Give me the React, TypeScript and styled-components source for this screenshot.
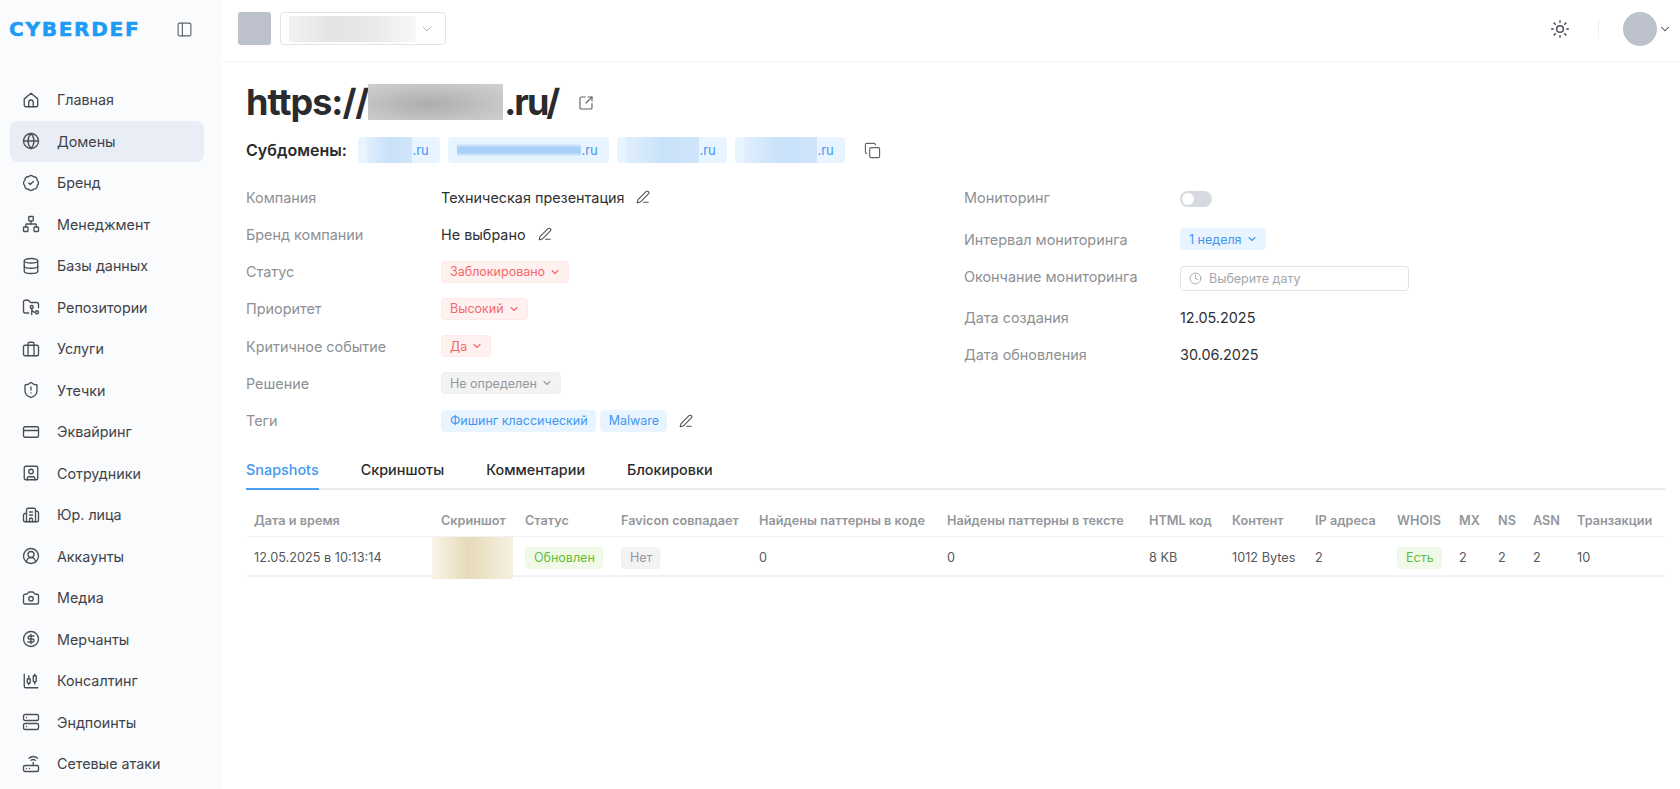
import React from 'react'
import styled, { createGlobalStyle } from 'styled-components'
import {
  BadgeCheck,
  Building2,
  Camera,
  ChartCandlestick,
  ChevronDown,
  CircleDollarSign,
  CircleUserRound,
  Clock,
  Copy,
  CreditCard,
  Database,
  FolderGit2,
  Globe,
  Network,
  PanelLeft,
  PenLine,
  Router,
  Server,
  ShieldAlert,
  SquareArrowOutUpRight,
  SquareUser,
  Sun,
} from 'lucide-react'

const GlobalStyle = createGlobalStyle`
  html, body {
    margin: 0;
    height: 100%;
    overflow: hidden;
    background: #fff;
    font-family: Inter, "Noto Sans", sans-serif;
    color: #2b2b2d;
  }
  * {
    box-sizing: border-box;
  }
`

const Page = styled.div`
  display: flex;
  height: 789px;
  overflow: hidden;
`

const Sidebar = styled.aside`
  flex: 0 0 221px;
  background: #fafbfd;
  padding: 0 17px 0 10px;
`

const Brand = styled.div`
  display: flex;
  align-items: center;
  justify-content: space-between;
  height: 58px;
  padding-right: 11px;
  color: #5f6368;
`

const Logo = styled.span`
  font-family: 'DejaVu Sans', sans-serif;
  font-weight: 700;
  font-size: 20px;
  letter-spacing: 1.75px;
  line-height: 1;
  margin-left: -1px;
  color: #1d9bf5;
  -webkit-text-stroke: 0.6px #1d9bf5;
`

const NavList = styled.nav`
  display: flex;
  flex-direction: column;
  margin-top: 21px;
`

const NavItem = styled.a<{ $active?: boolean }>`
  display: flex;
  align-items: center;
  gap: 17px;
  flex: 0 0 41.5px;
  padding-left: 12px;
  border-radius: 8px;
  font-size: 14.3px;
  color: #3f4349;
  background: ${(p) => (p.$active ? '#e9eef6' : 'transparent')};

  svg {
    flex: none;
    color: #4b4f55;
  }
`

const Content = styled.div`
  flex: 1;
  min-width: 0;
`

const Topbar = styled.header`
  display: flex;
  align-items: center;
  height: 62px;
  padding: 0 8px 4px 17px;
  border-bottom: 1px solid #f2f3f5;
`

const Square = styled.div`
  width: 33px;
  height: 33px;
  border-radius: 3px;
  background: #bcc1cb;
`

const ProjectSelect = styled.div`
  display: flex;
  align-items: center;
  justify-content: space-between;
  width: 166px;
  height: 33px;
  margin-left: 9px;
  padding: 0 10px 0 8px;
  border: 1px solid #e3e4e8;
  border-radius: 4px;
  color: #a9adb3;
`

const SelectBlur = styled.div`
  width: 127px;
  height: 26px;
  background: linear-gradient(90deg, #f2f2f2, #e4e4e4 35%, #e8e8e8 60%, #f7f7f7);
`

const TopActions = styled.div`
  display: flex;
  align-items: center;
  margin-left: auto;
  color: #4b4f55;
`

const ActionDivider = styled.div`
  width: 1px;
  height: 20px;
  margin: 0 24px 0 28px;
  background: #eeeff1;
`

const Avatar = styled.div`
  width: 34px;
  height: 34px;
  border-radius: 50%;
  background: #bcc1cb;
  margin-right: 1px;
`

const Main = styled.main`
  padding: 17px 15px 0 25px;
`

const TitleRow = styled.div`
  display: flex;
  align-items: center;
  height: 46px;
`

const Title = styled.h1`
  display: flex;
  align-items: center;
  margin: 0;
  font-size: 36px;
  line-height: 46px;
  font-weight: 700;
  letter-spacing: -1px;
  color: #2b2b2d;
`

const TitleBlur = styled.span`
  display: block;
  width: 135px;
  height: 36px;
  margin: 0 1px 0 0;
  background: radial-gradient(ellipse at 45% 55%, #adadad, #c4c4c4 60%, #d2d2d2);
`

const TitleEnd = styled.span`
  letter-spacing: -2px;
`

const TitleLink = styled.span`
  display: flex;
  margin-left: 20px;
  margin-top: 2px;
  color: #5f6368;
`

const SubRow = styled.div`
  display: flex;
  align-items: center;
  height: 26px;
  margin-top: 12px;
`

const SubLabel = styled.span`
  font-size: 16px;
  font-weight: 600;
  margin-right: 11px;
`

const SubChip = styled.span<{ $w: number }>`
  display: flex;
  align-items: center;
  justify-content: flex-end;
  width: ${(p) => p.$w}px;
  height: 26px;
  margin-right: 8px;
  padding: 0 11px 0 9px;
  border-radius: 4px;
  background: #e8f4ff;
  font-size: 13px;
  color: #3f97f2;
`

const ChipBlur = styled.span<{ $dark?: boolean }>`
  flex: 1;
  align-self: stretch;
  background: ${(p) =>
    p.$dark
      ? 'linear-gradient(180deg, #e8f4ff 25%, #a9d1f7 40%, #a9d1f7 60%, #e8f4ff 75%)'
      : 'linear-gradient(90deg, #e0effd, #c9e2fa 50%, #cfe5fb)'};
`

const CopyBtn = styled.span`
  display: flex;
  margin-left: 11px;
  color: #5f6368;
`

const InfoGrid = styled.div`
  display: grid;
  grid-template-columns: 718px 1fr;
  margin-top: 21px;
`

const InfoColumn = styled.div`
  display: flex;
  flex-direction: column;
`

const InfoRow = styled.div<{ $labelW: number; $top: number }>`
  display: grid;
  grid-template-columns: ${(p) => p.$labelW}px 1fr;
  align-items: center;
  height: 26px;
  margin-top: ${(p) => p.$top}px;
`

const Label = styled.span`
  font-size: 14.4px;
  color: #8d9095;
`

const Value = styled.span`
  display: flex;
  align-items: center;
  gap: 4px;
  font-size: 14.4px;
  color: #2f3033;
`

const EditIcon = styled(PenLine)`
  margin-left: 8px;
  color: #4b4f55;
`

const toneColors = {
  red: ['#fff1f0', '#ffe9e7', '#f4686a'],
  blue: ['#e8f4ff', '#e8f4ff', '#3f97f2'],
  gray: ['#f3f3f4', '#efeff1', '#96989c'],
  green: ['#f1fae9', '#edf8e3', '#63bd3c'],
}

type Tone = keyof typeof toneColors

const Tag = styled.span<{ $tone: Tone }>`
  display: inline-flex;
  align-items: center;
  gap: 4px;
  height: 22px;
  padding: 0 7px 0 8px;
  border-radius: 4px;
  border: 1px solid ${(p) => toneColors[p.$tone][1]};
  background: ${(p) => toneColors[p.$tone][0]};
  color: ${(p) => toneColors[p.$tone][2]};
  font-size: 12.5px;
  white-space: nowrap;
`

const Switch = styled.span`
  display: flex;
  align-items: center;
  width: 32px;
  height: 16px;
  margin-top: 3px;
  padding: 2px;
  border-radius: 8px;
  background: #d6d9e0;

  &::before {
    content: '';
    width: 12px;
    height: 12px;
    border-radius: 50%;
    background: #fff;
  }
`

const DateField = styled.div`
  display: flex;
  align-items: center;
  gap: 7px;
  width: 229px;
  height: 25px;
  margin-top: 4px;
  padding: 0 8px;
  border: 1px solid #e0e2e6;
  border-radius: 4px;
  font-size: 12.5px;
  color: #a3a6ab;
`

const Tabs = styled.div`
  display: flex;
  gap: 42px;
  margin-top: 24px;
  border-bottom: 2px solid #e9eaf0;
`

const Tab = styled.span<{ $active?: boolean }>`
  height: 32px;
  margin-bottom: -2px;
  padding-top: 1px;
  font-size: 14.4px;
  line-height: 22px;
  font-weight: 500;
  color: ${(p) => (p.$active ? '#3f97f2' : '#2b2b2d')};
  border-bottom: 2px solid ${(p) => (p.$active ? '#4aa0f2' : 'transparent')};
`

const gridColumns = '187px 84px 96px 138px 188px 202px 83px 83px 82px 62px 39px 35px 44px 96px'

const HeadRow = styled.div`
  display: grid;
  grid-template-columns: ${gridColumns};
  align-items: center;
  height: 34px;
  margin-top: 13px;
  padding-top: 2px;
  border-bottom: 1px solid #f1f2f5;
`

const BodyRow = styled.div`
  display: grid;
  grid-template-columns: ${gridColumns};
  align-items: center;
  height: 40px;
  padding-bottom: 2px;
  border-bottom: 2px solid #f1f2f5;
`

const HeadCell = styled.span`
  padding-left: 8px;
  font-size: 12.7px;
  font-weight: 600;
  color: #94979c;
  white-space: nowrap;
`

const BodyCell = styled.span`
  padding-left: 8px;
  font-size: 12.7px;
  color: #55585d;
  white-space: nowrap;
`

const ShotBlur = styled.div`
  width: 81px;
  height: 42px;
  margin-left: -1px;
  background: linear-gradient(90deg, #f8f4e8, #e6dab9 45%, #efe7d0 75%, #f6f1e2);
`

const iconProps = {
  width: 18,
  height: 18,
  viewBox: '0 0 24 24',
  fill: 'none',
  stroke: 'currentColor',
  strokeWidth: 1.8,
  strokeLinecap: 'round' as const,
  strokeLinejoin: 'round' as const,
}

const HomeIcon = () => (
  <svg {...iconProps}>
    <path d="M3 10.5 12 3l9 7.5V19a2 2 0 0 1-2 2H5a2 2 0 0 1-2-2z" />
    <path d="M9 21v-6a3 3 0 0 1 6 0v6" />
  </svg>
)

const CaseIcon = () => (
  <svg {...iconProps}>
    <rect x="2" y="7" width="20" height="14" rx="2" />
    <path d="M8 21V5a2 2 0 0 1 2-2h4a2 2 0 0 1 2 2v16" />
  </svg>
)

const nav = [
  { icon: HomeIcon, label: 'Главная' },
  { icon: Globe, label: 'Домены', active: true },
  { icon: BadgeCheck, label: 'Бренд' },
  { icon: Network, label: 'Менеджмент' },
  { icon: Database, label: 'Базы данных' },
  { icon: FolderGit2, label: 'Репозитории' },
  { icon: CaseIcon, label: 'Услуги' },
  { icon: ShieldAlert, label: 'Утечки' },
  { icon: CreditCard, label: 'Эквайринг' },
  { icon: SquareUser, label: 'Сотрудники' },
  { icon: Building2, label: 'Юр. лица' },
  { icon: CircleUserRound, label: 'Аккаунты' },
  { icon: Camera, label: 'Медиа' },
  { icon: CircleDollarSign, label: 'Мерчанты' },
  { icon: ChartCandlestick, label: 'Консалтинг' },
  { icon: Server, label: 'Эндпоинты' },
  { icon: Router, label: 'Сетевые атаки' },
]

const heads = [
  'Дата и время',
  'Скриншот',
  'Статус',
  'Favicon совпадает',
  'Найдены паттерны в коде',
  'Найдены паттерны в тексте',
  'HTML код',
  'Контент',
  'IP адреса',
  'WHOIS',
  'MX',
  'NS',
  'ASN',
  'Транзакции',
]

const Caret = () => <ChevronDown size={12} strokeWidth={2.2} />

const App = () => (
  <Page>
    <GlobalStyle />
    <Sidebar>
      <Brand>
        <Logo>CYBERDEF</Logo>
        <PanelLeft size={17} strokeWidth={1.6} />
      </Brand>
      <NavList>
        {nav.map(({ icon: Icon, label, active }) => (
          <NavItem key={label} $active={active}>
            <Icon size={18} strokeWidth={1.8} />
            {label}
          </NavItem>
        ))}
      </NavList>
    </Sidebar>

    <Content>
      <Topbar>
        <Square />
        <ProjectSelect>
          <SelectBlur />
          <ChevronDown size={16} strokeWidth={1.3} />
        </ProjectSelect>
        <TopActions>
          <Sun size={20} strokeWidth={1.8} />
          <ActionDivider />
          <Avatar />
          <ChevronDown size={14} strokeWidth={1.8} />
        </TopActions>
      </Topbar>

      <Main>
        <TitleRow>
          <Title>
            https://
            <TitleBlur />
            <TitleEnd>.ru/</TitleEnd>
          </Title>
          <TitleLink>
            <SquareArrowOutUpRight size={16} strokeWidth={1.7} />
          </TitleLink>
        </TitleRow>

        <SubRow>
          <SubLabel>Субдомены:</SubLabel>
          <SubChip $w={82}>
            <ChipBlur />
            .ru
          </SubChip>
          <SubChip $w={161}>
            <ChipBlur $dark />
            .ru
          </SubChip>
          <SubChip $w={110}>
            <ChipBlur />
            .ru
          </SubChip>
          <SubChip $w={110}>
            <ChipBlur />
            .ru
          </SubChip>
          <CopyBtn>
            <Copy size={17} strokeWidth={1.6} />
          </CopyBtn>
        </SubRow>

        <InfoGrid>
          <InfoColumn>
            <InfoRow $labelW={195} $top={0}>
              <Label>Компания</Label>
              <Value>
                Техническая презентация
                <EditIcon size={14} strokeWidth={1.8} />
              </Value>
            </InfoRow>
            <InfoRow $labelW={195} $top={11.3}>
              <Label>Бренд компании</Label>
              <Value>
                Не выбрано
                <EditIcon size={14} strokeWidth={1.8} />
              </Value>
            </InfoRow>
            <InfoRow $labelW={195} $top={11.3}>
              <Label>Статус</Label>
              <Value>
                <Tag $tone="red">
                  Заблокировано
                  <Caret />
                </Tag>
              </Value>
            </InfoRow>
            <InfoRow $labelW={195} $top={11.3}>
              <Label>Приоритет</Label>
              <Value>
                <Tag $tone="red">
                  Высокий
                  <Caret />
                </Tag>
              </Value>
            </InfoRow>
            <InfoRow $labelW={195} $top={11.3}>
              <Label>Критичное событие</Label>
              <Value>
                <Tag $tone="red">
                  Да
                  <Caret />
                </Tag>
              </Value>
            </InfoRow>
            <InfoRow $labelW={195} $top={11.3}>
              <Label>Решение</Label>
              <Value>
                <Tag $tone="gray">
                  Не определен
                  <Caret />
                </Tag>
              </Value>
            </InfoRow>
            <InfoRow $labelW={195} $top={11.3}>
              <Label>Теги</Label>
              <Value>
                <Tag $tone="blue">Фишинг классический</Tag>
                <Tag $tone="blue">Malware</Tag>
                <EditIcon size={14} strokeWidth={1.8} />
              </Value>
            </InfoRow>
          </InfoColumn>

          <InfoColumn>
            <InfoRow $labelW={216} $top={0}>
              <Label>Мониторинг</Label>
              <Value>
                <Switch />
              </Value>
            </InfoRow>
            <InfoRow $labelW={216} $top={16}>
              <Label>Интервал мониторинга</Label>
              <Value>
                <Tag $tone="blue">
                  1 неделя
                  <Caret />
                </Tag>
              </Value>
            </InfoRow>
            <InfoRow $labelW={216} $top={10}>
              <Label>Окончание мониторинга</Label>
              <DateField>
                <Clock size={13} strokeWidth={1.7} />
                Выберите дату
              </DateField>
            </InfoRow>
            <InfoRow $labelW={216} $top={16}>
              <Label>Дата создания</Label>
              <Value>12.05.2025</Value>
            </InfoRow>
            <InfoRow $labelW={216} $top={11.5}>
              <Label>Дата обновления</Label>
              <Value>30.06.2025</Value>
            </InfoRow>
          </InfoColumn>
        </InfoGrid>

        <Tabs>
          <Tab $active>Snapshots</Tab>
          <Tab>Скриншоты</Tab>
          <Tab>Комментарии</Tab>
          <Tab>Блокировки</Tab>
        </Tabs>

        <HeadRow>
          {heads.map((h) => (
            <HeadCell key={h}>{h}</HeadCell>
          ))}
        </HeadRow>
        <BodyRow>
          <BodyCell>12.05.2025 в 10:13:14</BodyCell>
          <ShotBlur />
          <BodyCell>
            <Tag $tone="green">Обновлен</Tag>
          </BodyCell>
          <BodyCell>
            <Tag $tone="gray">Нет</Tag>
          </BodyCell>
          <BodyCell>0</BodyCell>
          <BodyCell>0</BodyCell>
          <BodyCell>8 KB</BodyCell>
          <BodyCell>1012 Bytes</BodyCell>
          <BodyCell>2</BodyCell>
          <BodyCell>
            <Tag $tone="green">Есть</Tag>
          </BodyCell>
          <BodyCell>2</BodyCell>
          <BodyCell>2</BodyCell>
          <BodyCell>2</BodyCell>
          <BodyCell>10</BodyCell>
        </BodyRow>
      </Main>
    </Content>
  </Page>
)

export default App
